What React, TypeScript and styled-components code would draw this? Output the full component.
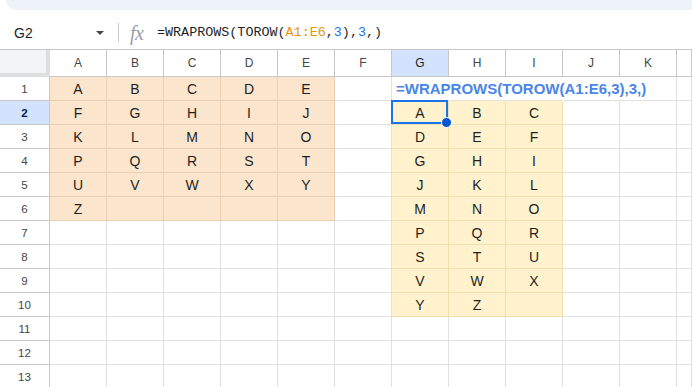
import React from "react";
import styled, { createGlobalStyle, css } from "styled-components";

const Global = createGlobalStyle`
  html, body { margin: 0; padding: 0; background: #fff; }
  body { font-family: "Liberation Sans", Arial, sans-serif; overflow: hidden; }
  * { box-sizing: border-box; }
`;

const Page = styled.div`
  width: 692px;
  height: 387px;
  overflow: hidden;
  background: #fff;
  display: flex;
  flex-direction: column;
`;

const TopBand = styled.div`
  height: 10px;
  flex: none;
  margin-left: 6px;
  background: #eef2f9;
  border-bottom-left-radius: 18px;
`;

const FormulaBar = styled.div`
  flex: none;
  height: 40px;
  padding: 6px 0 0 14px;
  display: flex;
  align-items: center;
  border-bottom: 1px solid #c7c7c7;
`;

const NameBox = styled.div`
  width: 90px;
  display: flex;
  align-items: center;
  justify-content: space-between;
  font-size: 14px;
  color: #1f1f1f;
`;

const Caret = styled.span`
  width: 0;
  height: 0;
  border-left: 4px solid transparent;
  border-right: 4px solid transparent;
  border-top: 4px solid #444746;
`;

const Divider = styled.div`
  width: 1px;
  height: 19px;
  margin-left: 14px;
  background: #c7c7c7;
`;

const Fx = styled.span`
  margin-left: 11px;
  width: 18px;
  font-family: "Liberation Serif", "DejaVu Serif", serif;
  font-style: italic;
  font-size: 20px;
  line-height: 1;
  color: #9aa0a6;
  letter-spacing: -0.5px;
`;

const FormulaText = styled.div`
  margin-left: 9px;
  font-family: "Liberation Mono", "DejaVu Sans Mono", monospace;
  font-size: 13.4px;
  color: #1f1f1f;
  white-space: pre;
`;

const Ref = styled.span<{ $kind: "range" | "num" }>`
  color: ${(p) => (p.$kind === "range" ? "#e8940a" : "#1a73e8")};
`;

const Grid = styled.div`
  display: grid;
  grid-template-columns: 50px repeat(11, 57px) 15px;
  grid-template-rows: 27px;
  grid-auto-rows: 24px;
`;

const Corner = styled.div`
  background: #f3f4f5;
  border-right: 4px solid #dcdedf;
  border-bottom: 4px solid #dcdedf;
`;

const ColHeader = styled.div<{ $active?: boolean }>`
  display: flex;
  align-items: center;
  justify-content: center;
  font-size: 12px;
  color: #444746;
  border-right: 1px solid #c7c7c7;
  border-bottom: 1px solid #c7c7c7;
  background: ${(p) => (p.$active ? "#d3e3fd" : "#fff")};
  ${(p) => p.$active && css`color: #1f1f1f;`}
`;

const RowHeader = styled.div<{ $active?: boolean }>`
  display: flex;
  align-items: center;
  justify-content: center;
  font-size: 11.5px;
  color: #444746;
  border-right: 1px solid #c7c7c7;
  border-bottom: 1px solid #c7c7c7;
  background: ${(p) => (p.$active ? "#d3e3fd" : "#fff")};
  ${(p) =>
    p.$active &&
    css`
      font-weight: bold;
      color: #041e49;
    `}
`;

type Fill = "orange" | "yellow" | undefined;

const fillBg = { orange: "#fce5cd", yellow: "#fff2cc" };
const fillLine = { orange: "#ebcfb2", yellow: "#f1e0af" };

const Cell = styled.div<{ $fill?: Fill; $noRight?: boolean }>`
  position: relative;
  display: flex;
  align-items: center;
  justify-content: center;
  font-size: 14px;
  color: #1f1f1f;
  background: ${(p) => (p.$fill ? fillBg[p.$fill] : "#fff")};
  border-bottom: 1px solid ${(p) => (p.$fill ? fillLine[p.$fill] : "#e1e1e1")};
  border-right: 1px solid
    ${(p) => (p.$noRight ? "transparent" : p.$fill ? fillLine[p.$fill] : "#e1e1e1")};
`;

const Overflow = styled.span`
  position: absolute;
  left: 4px;
  top: 3px;
  z-index: 2;
  white-space: nowrap;
  font-size: 15px;
  font-weight: bold;
  color: #4a86e8;
`;

const Selection = styled.div`
  position: absolute;
  left: -1px;
  top: -1px;
  right: 0;
  bottom: 0;
  border: 2px solid #1a73e8;
  z-index: 3;
  pointer-events: none;
`;

const Handle = styled.span`
  position: absolute;
  right: -6px;
  bottom: -6px;
  width: 11px;
  height: 11px;
  border-radius: 50%;
  background: #0b57d0;
  border: 1px solid #fff;
`;

// The last column (L) is only a sliver at the right edge; its label falls outside the view.
const COLS = ["A", "B", "C", "D", "E", "F", "G", "H", "I", "J", "K", ""];
const letters = "ABCDEFGHIJKLMNOPQRSTUVWXYZ".split("");

function cellValue(r: number, c: number): { text: string; fill: Fill } {
  if (c <= 4 && r <= 6) {
    const idx = (r - 1) * 5 + c;
    return { text: letters[idx] ?? "", fill: "orange" };
  }
  if (c >= 6 && c <= 8 && r >= 2 && r <= 10) {
    const idx = (r - 2) * 3 + (c - 6);
    return { text: letters[idx] ?? "", fill: "yellow" };
  }
  return { text: "", fill: undefined };
}

export default function App() {
  const rows = Array.from({ length: 13 }, (_, i) => i + 1);
  return (
    <Page>
      <Global />
      <TopBand />
      <FormulaBar>
        <NameBox>
          <span>G2</span>
          <Caret />
        </NameBox>
        <Divider />
        <Fx>fx</Fx>
        <FormulaText>
          =WRAPROWS(TOROW(<Ref $kind="range">A1:E6</Ref>,<Ref $kind="num">3</Ref>),
          <Ref $kind="num">3</Ref>,)
        </FormulaText>
      </FormulaBar>
      <Grid>
        <Corner />
        {COLS.map((c, i) => (
          <ColHeader key={i} $active={c === "G"}>
            {c}
          </ColHeader>
        ))}
        {rows.map((r) => (
          <React.Fragment key={r}>
            <RowHeader $active={r === 2}>{r}</RowHeader>
            {COLS.map((_, c) => {
              const { text, fill } = cellValue(r, c);
              const noRight = r === 1 && c >= 6 && c <= 9;
              return (
                <Cell key={c} $fill={fill} $noRight={noRight}>
                  {r === 1 && c === 6 && <Overflow>=WRAPROWS(TOROW(A1:E6,3),3,)</Overflow>}
                  {text}
                  {r === 2 && c === 6 && (
                    <Selection>
                      <Handle />
                    </Selection>
                  )}
                </Cell>
              );
            })}
          </React.Fragment>
        ))}
      </Grid>
    </Page>
  );
}
